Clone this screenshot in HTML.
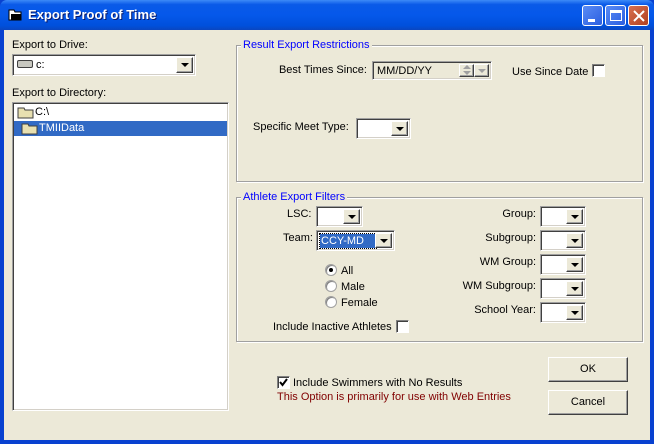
<!DOCTYPE html>
<html><head><style>
*{margin:0;padding:0;box-sizing:border-box}
body{width:654px;height:444px;overflow:hidden;background:#0841d0;font-family:"Liberation Sans",sans-serif;font-size:11px;color:#000;position:relative}
.a{position:absolute}
#title{left:0;top:0;width:654px;height:30px;background:linear-gradient(#3d8af7 0%,#0a5ae8 15%,#0558ea 50%,#0050dc 85%,#0a46c0 100%);border-radius:7px 7px 0 0}
#title .t{left:28px;top:7px;color:#fff;font-weight:bold;font-size:13px;text-shadow:1px 1px #0a1a6a}
.tb{top:5px;width:21px;height:21px;border:1px solid #fff;border-radius:3px;background:linear-gradient(135deg,#5a8cf5,#2a5ee0)}
#client{left:4px;top:30px;width:646px;height:410px;background:#ece9d8}
.sunk{border:1px solid;border-color:#a0a0a0 #fff #fff #a0a0a0;box-shadow:inset 1px 1px #404040,inset -1px -1px #d4d0c8;background:#fff}
.btn{background:#ece9d8;border:1px solid;border-color:#fff #404040 #404040 #fff;box-shadow:inset -1px -1px #a0a0a0}
.dd{width:17px;top:2px;bottom:2px;right:2px}
.dd:after{content:"";position:absolute;left:4px;top:50%;margin-top:-2px;border-left:4px solid transparent;border-right:4px solid transparent;border-top:4px solid #000}
.grp{border:1px solid #a0a0a0;box-shadow:1px 1px #fff,inset 1px 1px #fff}
.leg{background:#ece9d8;color:#0000ff;padding:0 2px;top:-7px;left:4px}
.cb{width:13px;height:13px;background:#fff;border:1px solid;border-color:#808080 #fff #fff #808080;box-shadow:inset 1px 1px #404040}
.rd{width:12px;height:12px;border-radius:50%;background:#fff;border:1px solid #a0a0a0;box-shadow:inset 1px 1px #808080}
.r{text-align:right}
</style></head><body>
<div id="title" class="a">
 <svg class="a" style="left:8px;top:9px" width="14" height="12"><path d="M1 1h5l1 2h6v8H1z" fill="#fff" stroke="#000"/><path d="M3 5h10v6H3z" fill="#000"/></svg>
 <div class="a t">Export Proof of Time</div>
 <div class="a tb" style="left:582px"><div class="a" style="left:5px;top:13px;width:7px;height:3px;background:#fff"></div></div>
 <div class="a tb" style="left:605px"><div class="a" style="left:4px;top:4px;width:12px;height:11px;border:1px solid #fff;border-top-width:3px"></div></div>
 <div class="a tb" style="left:628px;background:linear-gradient(135deg,#d87050,#b04020)"><svg class="a" style="left:4px;top:4px" width="12" height="12"><path d="M1 1L11 11M11 1L1 11" stroke="#fff" stroke-width="2"/></svg></div>
</div>
<div id="client" class="a"></div>
<div class="a" style="left:12px;top:39px">Export to Drive:</div>
<div class="a sunk" style="left:12px;top:54px;width:184px;height:22px">
 <div class="a" style="left:4px;top:5px;width:16px;height:8px;background:#c8c8c0;border:1px solid #404040;border-radius:2px"></div>
 <div class="a" style="left:23px;top:4px">c:</div>
 <div class="a btn dd"></div>
</div>
<div class="a" style="left:12px;top:87px">Export to Directory:</div>
<div class="a sunk" style="left:12px;top:102px;width:217px;height:309px">
 <svg class="a" style="left:4px;top:3px" width="18" height="13"><path d="M1 2h6l1 2h8v8H1z" fill="#e8e0b0" stroke="#404040"/></svg>
 <div class="a" style="left:22px;top:3px">C:\</div>
 <div class="a" style="left:1px;top:18px;width:213px;height:15px;background:#316ac5"></div>
 <svg class="a" style="left:8px;top:19px" width="18" height="13"><path d="M1 2h6l1 2h8v8H1z" fill="#e8e0b0" stroke="#404040"/></svg>
 <div class="a" style="left:26px;top:19px;color:#fff">TMIIData</div>
</div>

<div class="a grp" style="left:236px;top:45px;width:407px;height:137px">
 <div class="a leg">Result Export Restrictions</div>
</div>
<div class="a r" style="left:260px;top:64px;width:107px">Best Times Since:</div>
<div class="a sunk" style="left:372px;top:61px;width:120px;height:19px;background:#ece9d8">
 <div class="a" style="left:4px;top:3px">MM/DD/YY</div>
 <div class="a btn" style="left:86px;top:2px;width:15px;height:13px">
  <div class="a" style="left:3px;top:0px;border-left:4px solid transparent;border-right:4px solid transparent;border-bottom:4px solid #a0a0a0"></div>
  <div class="a" style="left:3px;top:6px;border-left:4px solid transparent;border-right:4px solid transparent;border-top:4px solid #a0a0a0"></div></div>
 <div class="a btn" style="left:101px;top:2px;width:15px;height:13px"><div class="a" style="left:3px;top:4px;border-left:4px solid transparent;border-right:4px solid transparent;border-top:4px solid #a0a0a0"></div></div>
</div>
<div class="a" style="left:512px;top:66px">Use Since Date</div>
<div class="a cb" style="left:592px;top:64px"></div>
<div class="a" style="left:253px;top:121px">Specific Meet Type:</div>
<div class="a sunk" style="left:356px;top:118px;width:55px;height:21px"><div class="a btn dd"></div></div>

<div class="a grp" style="left:236px;top:197px;width:407px;height:145px">
 <div class="a leg">Athlete Export Filters</div>
</div>
<div class="a" style="left:287px;top:208px">LSC:</div>
<div class="a sunk" style="left:316px;top:206px;width:47px;height:21px"><div class="a btn dd"></div></div>
<div class="a" style="left:283px;top:232px">Team:</div>
<div class="a sunk" style="left:316px;top:230px;width:79px;height:21px">
 <div class="a" style="left:3px;top:3px;width:56px;height:14px;background:#316ac5;outline:1px dotted #000;color:#fff;padding:1px 1px">CCY-MD</div>
 <div class="a btn dd"></div></div>
<div class="a rd" style="left:325px;top:264px"><div class="a" style="left:3px;top:3px;width:4px;height:4px;background:#000;border-radius:50%"></div></div>
<div class="a" style="left:341px;top:265px">All</div>
<div class="a rd" style="left:325px;top:280px"></div>
<div class="a" style="left:341px;top:281px">Male</div>
<div class="a rd" style="left:325px;top:296px"></div>
<div class="a" style="left:341px;top:297px">Female</div>
<div class="a" style="left:273px;top:321px">Include Inactive Athletes</div>
<div class="a cb" style="left:396px;top:320px"></div>

<div class="a r" style="left:436px;top:208px;width:100px">Group:</div>
<div class="a r" style="left:436px;top:232px;width:100px">Subgroup:</div>
<div class="a r" style="left:436px;top:256px;width:100px">WM Group:</div>
<div class="a r" style="left:436px;top:280px;width:100px">WM Subgroup:</div>
<div class="a r" style="left:436px;top:304px;width:100px">School Year:</div>
<div class="a sunk" style="left:540px;top:206px;width:46px;height:21px"><div class="a btn dd"></div></div>
<div class="a sunk" style="left:540px;top:230px;width:46px;height:21px"><div class="a btn dd"></div></div>
<div class="a sunk" style="left:540px;top:254px;width:46px;height:21px"><div class="a btn dd"></div></div>
<div class="a sunk" style="left:540px;top:278px;width:46px;height:21px"><div class="a btn dd"></div></div>
<div class="a sunk" style="left:540px;top:302px;width:46px;height:21px"><div class="a btn dd"></div></div>

<div class="a cb" style="left:277px;top:376px"><svg class="a" style="left:1px;top:1px" width="9" height="9"><path d="M1 4l2.5 3L8 1" stroke="#000" stroke-width="2" fill="none"/></svg></div>
<div class="a" style="left:293px;top:377px">Include Swimmers with No Results</div>
<div class="a" style="left:277px;top:391px;color:#800000">This Option is primarily for use with Web Entries</div>
<div class="a btn" style="left:548px;top:357px;width:80px;height:25px;text-align:center;line-height:23px">OK</div>
<div class="a btn" style="left:548px;top:390px;width:80px;height:25px;text-align:center;line-height:23px">Cancel</div>
</body></html>
